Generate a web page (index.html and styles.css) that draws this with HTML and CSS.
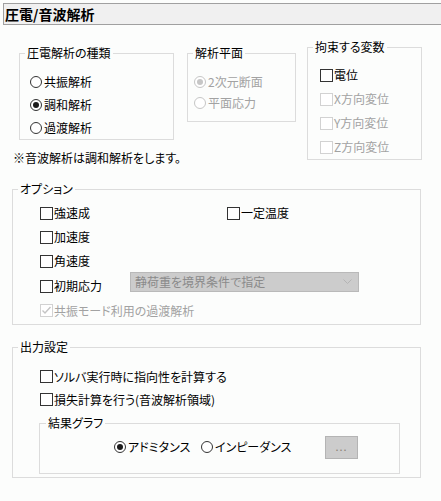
FILE: index.html
```html
<!DOCTYPE html>
<html lang="ja">
<head>
<meta charset="utf-8">
<link rel="stylesheet" href="styles.css">
</head>
<body>
<div class="title">圧電/音波解析</div>

<div class="top">
  <div class="left-col">
    <div class="group-row">
      <fieldset class="g g-type">
        <legend>圧電解析の種類</legend>
        <div class="rows">
          <div class="opt"><span class="radio"></span>共振解析</div>
          <div class="opt"><span class="radio on"></span>調和解析</div>
          <div class="opt"><span class="radio"></span>過渡解析</div>
        </div>
      </fieldset>
      <fieldset class="g g-plane">
        <legend>解析平面</legend>
        <div class="rows">
          <div class="opt dis"><span class="radio on"></span>2次元断面</div>
          <div class="opt dis"><span class="radio"></span>平面応力</div>
        </div>
      </fieldset>
    </div>
    <p class="note">※音波解析は調和解析をします。</p>
  </div>
  <fieldset class="g g-vars">
    <legend>拘束する変数</legend>
    <div class="rows">
      <div class="opt"><span class="check"></span>電位</div>
      <div class="opt dis"><span class="check"></span>X方向変位</div>
      <div class="opt dis"><span class="check"></span>Y方向変位</div>
      <div class="opt dis"><span class="check"></span>Z方向変位</div>
    </div>
  </fieldset>
</div>

<fieldset class="g g-opts">
  <legend>オプション</legend>
  <div class="rows">
    <div class="orow"><div class="opt w187"><span class="check"></span>強速成</div><div class="opt"><span class="check"></span>一定温度</div></div>
    <div class="orow"><div class="opt"><span class="check"></span>加速度</div></div>
    <div class="orow"><div class="opt"><span class="check"></span>角速度</div></div>
    <div class="orow r4"><div class="opt w90"><span class="check"></span>初期応力</div>
      <div class="select"><span>静荷重を境界条件で指定</span>
        <svg class="chev" width="9" height="6" viewBox="0 0 9 6"><polyline points="0.5,0.5 4.5,4.5 8.5,0.5" fill="none" stroke="#b4b4b4" stroke-width="1"/></svg>
      </div>
    </div>
    <div class="orow r5"><div class="opt dis"><span class="check"><svg width="11" height="11" viewBox="0 0 11 11"><polyline points="1.5,5.5 4,8 9.5,2" fill="none" stroke="#c4c4c4" stroke-width="1.4"/></svg></span>共振モード利用の過渡解析</div></div>
  </div>
</fieldset>

<fieldset class="g g-out">
  <legend>出力設定</legend>
  <div class="rows">
    <div class="orow h23"><div class="opt"><span class="check"></span>ソルバ実行時に指向性を計算する</div></div>
    <div class="orow h23"><div class="opt"><span class="check"></span>損失計算を行う(音波解析領域)</div></div>
  </div>
  <fieldset class="g g-graph">
    <legend>結果グラフ</legend>
    <div class="graph-row">
      <div class="opt w87"><span class="radio on"></span>アドミタンス</div>
      <div class="opt w124"><span class="radio"></span>インピーダンス</div>
      <div class="btn">...</div>
    </div>
  </fieldset>
</fieldset>
</body>
</html>
```

FILE: styles.css
```css
html, body {
  margin: 0;
  padding: 0;
}
body {
  background: #fcfdfc;
  font-family: "Noto Sans CJK JP", "Noto Sans", sans-serif;
  font-size: 12px;
  color: #000;
  font-feature-settings: "palt";
  width: 441px;
  height: 501px;
  overflow: hidden;
}

.title {
  margin: 3px 0 0 3px;
  height: 20px;
  line-height: 20px;
  border: 1px solid #a0a0a0;
  border-right: none;
  background: #f0f0f0;
  padding-left: 1px;
  font-size: 14px;
  font-weight: bold;
}

/* group boxes */
.g {
  margin: 0;
  padding: 0;
  border: 1px solid #dcdcdc;
  min-width: 0;
  box-sizing: border-box;
}
.g > legend {
  padding: 0 2px;
  margin-left: 5px;
  line-height: 14px;
  font-size: 12px;
}

.top {
  display: flex;
  align-items: flex-start;
  margin-top: 15px;
  padding-left: 13px;
}
.left-col {
  width: 283px;
  margin-top: 6px;
}
.group-row {
  display: flex;
  align-items: flex-start;
  padding-left: 6px;
}
.g-type {
  width: 155px;
}
.g-type .rows {
  padding: 10px 0 0 10px;
}
.g-type .opt { height: 23px; }

.g-plane {
  width: 109px;
  margin-left: 13px;
}
.g-plane .rows {
  padding: 11px 0 8px 6px;
}
.g-plane .opt { height: 21px; }

.note {
  margin: 10px 0 0 0;
  line-height: 16px;
}

.g-vars {
  width: 115px;
  margin-left: 11px;
}
.g-vars > legend { margin-left: 5px; }
.g-vars .rows {
  padding: 9px 0 0 12px;
}
.g-vars .opt { height: 24px; }

/* options */
.opt {
  display: flex;
  align-items: center;
  white-space: nowrap;
  line-height: 16px;
}
.opt.dis { color: #a2a2a2; }

.radio {
  width: 12px;
  height: 12px;
  box-sizing: border-box;
  border: 1px solid #333;
  border-radius: 50%;
  background: #fff;
  margin-right: 2px;
  display: flex;
  align-items: center;
  justify-content: center;
  flex: none;
}
.radio.on::after {
  content: "";
  width: 6px;
  height: 6px;
  border-radius: 50%;
  background: #1a1a1a;
}
.dis .radio { border-color: #c6c6c6; }
.dis .radio.on::after { background: #c6c6c6; }

.check {
  width: 13px;
  height: 13px;
  box-sizing: border-box;
  border: 1px solid #333;
  background: #fff;
  margin-right: 1px;
  flex: none;
  display: flex;
  align-items: center;
  justify-content: center;
}
.dis .check { border-color: #d2d2d2; }

.g-opts {
  margin: 16px 0 0 12px;
  width: 409px;
}
.g-opts .rows {
  padding: 5px 0 2px 27px;
}
.orow {
  display: flex;
  align-items: center;
  height: 24px;
}
.orow.r4 { height: 26px; }
.orow.r5 { height: 23px; }
.orow.h23 { height: 23px; }
.w187 { width: 187px; }
.w90 { width: 90px; }
.w87 { width: 87px; }
.w124 { width: 124px; }

.select {
  width: 229px;
  height: 20px;
  box-sizing: border-box;
  margin-bottom: 8px;
  border: 1px solid #b9b9b9;
  background: #cccccc;
  color: #8a8a8a;
  display: flex;
  align-items: center;
  justify-content: space-between;
  padding: 0 6px 0 4px;
  line-height: 16px;
}
.chev { display: block; }

.g-out {
  margin: 15px 0 0 12px;
  width: 409px;
  padding-bottom: 3px;
}
.g-out .rows {
  padding: 11px 0 0 27px;
}

.g-graph {
  margin: 5px 0 0 26px;
  width: 361px;
}
.g-graph > legend { margin-left: 6px; }
.graph-row {
  display: flex;
  align-items: center;
  height: 24px;
  padding: 5px 0 14px 74px;
}
.btn {
  width: 33px;
  height: 23px;
  box-sizing: border-box;
  border: 1px solid #b4b4b4;
  background: #cccccc;
  color: #8a7f74;
  font-size: 11px;
  line-height: 18px;
  text-align: center;
  letter-spacing: 1px;
}
```
